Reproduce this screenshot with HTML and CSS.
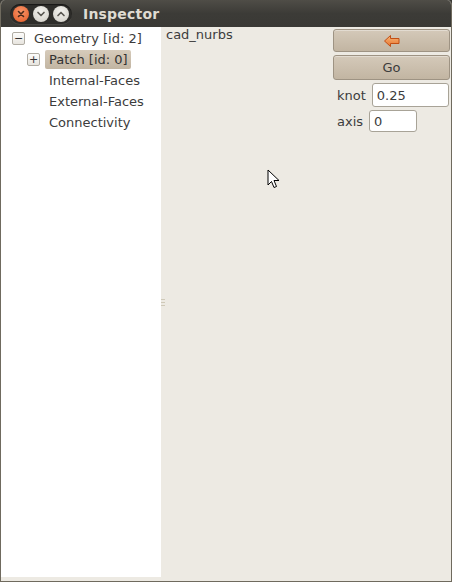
FILE: index.html
```html
<!DOCTYPE html>
<html>
<head>
<meta charset="utf-8">
<link rel="stylesheet" href="styles.css">
</head>
<body>
<div class="window">
  <div class="titlebar">
    <div class="controls">
      <span class="wbtn close"><svg width="14" height="14" viewBox="0 0 14 14"><path d="M4.5 4.5 L9.5 9.5 M9.5 4.5 L4.5 9.5" stroke="#4a2a1a" stroke-width="1.6" stroke-linecap="round"/></svg></span>
      <span class="wbtn"><svg width="14" height="14" viewBox="0 0 14 14"><path d="M4 5.5 L7 8.5 L10 5.5" fill="none" stroke="#5a5852" stroke-width="1.7" stroke-linecap="round" stroke-linejoin="round"/></svg></span>
      <span class="wbtn"><svg width="14" height="14" viewBox="0 0 14 14"><path d="M4 8.5 L7 5.5 L10 8.5" fill="none" stroke="#5a5852" stroke-width="1.7" stroke-linecap="round" stroke-linejoin="round"/></svg></span>
    </div>
    <span class="title">Inspector</span>
  </div>
  <div class="content">
    <div class="tree">
      <div class="row lvl0"><span class="exp">−</span><span class="item">Geometry [id: 2]</span></div>
      <div class="row lvl1"><span class="exp">+</span><span class="item selected">Patch [id: 0]</span></div>
      <div class="row lvl2"><span class="item">Internal-Faces</span></div>
      <div class="row lvl2"><span class="item">External-Faces</span></div>
      <div class="row lvl2"><span class="item">Connectivity</span></div>
    </div>
    <div class="splitter"><span></span><span></span><span></span></div>
    <div class="main">
      <div class="name">cad_nurbs</div>
    </div>
    <div class="side">
      <button class="btn back"><svg width="18" height="14" viewBox="0 0 18 14"><defs><linearGradient id="ag" x1="0" y1="0" x2="0" y2="1"><stop offset="0" stop-color="#f7b77a"/><stop offset="1" stop-color="#e8742e"/></linearGradient></defs><path d="M1.5 7 L7.5 1.5 L7.5 4.5 L16 4.5 L16 9.5 L7.5 9.5 L7.5 12.5 Z" fill="url(#ag)" stroke="#c24e14" stroke-width="1" stroke-linejoin="round"/></svg></button>
      <button class="btn go">Go</button>
      <div class="field knot"><span class="lbl">knot</span><span class="input wide">0.25</span></div>
      <div class="field axis"><span class="lbl">axis</span><span class="input narrow">0</span></div>
    </div>
  </div>
  <div class="bottom"></div>
  <svg class="cursor" width="14" height="22" viewBox="0 0 14 22"><path d="M1 1 L1 16 L4.5 12.5 L7 18.5 L9.5 17.5 L7 11.5 L12 11.5 Z" fill="#fff" stroke="#000" stroke-width="1" stroke-linejoin="round"/></svg>
</div>
</body>
</html>
```

FILE: styles.css
```css
* { box-sizing: border-box; }
html, body { margin: 0; padding: 0; }
body {
  width: 452px;
  height: 582px;
  font-family: "DejaVu Sans", sans-serif;
  font-size: 13px;
  color: #3c3c3c;
  background: #3c3b37;
}
.window {
  position: relative;
  width: 452px;
  height: 582px;
  display: flex;
  flex-direction: column;
  background: #edeae3;
  border-left: 1px solid #6f6a5e;
  border-right: 1px solid #6f6a5e;
  border-bottom: 1px solid #6f6a5e;
  border-radius: 5px 5px 0 0;
  overflow: hidden;
}
.titlebar {
  height: 27px;
  flex: none;
  display: flex;
  align-items: center;
  background: linear-gradient(#4f4d47, #3c3b37 50%, #3a3935);
  padding-left: 9px;
}
.controls {
  display: flex;
  gap: 4px;
  padding: 2px 3px;
  background: #2e2d2a;
  border-radius: 11px;
  box-shadow: inset 0 1px 1px rgba(0,0,0,.5), 0 1px 0 rgba(255,255,255,.08);
}
.wbtn {
  width: 16px;
  height: 16px;
  border-radius: 50%;
  display: flex;
  align-items: center;
  justify-content: center;
  background: radial-gradient(circle at 50% 35%, #f4f3ef, #cfccc4);
}
.wbtn.close {
  background: radial-gradient(circle at 50% 35%, #f99468, #e35b27);
}
.title {
  margin-left: 11px;
  font-weight: bold;
  font-size: 14px;
  color: #dfdbd2;
  letter-spacing: 0.2px;
}
.content {
  flex: 1;
  display: flex;
  min-height: 0;
}
.tree {
  width: 160px;
  flex: none;
  background: #fff;
  padding-top: 1px;
}
.row {
  height: 21px;
  display: flex;
  align-items: center;
}
.lvl0 { padding-left: 11px; }
.lvl1 { padding-left: 26px; }
.lvl2 { padding-left: 48px; }
.exp {
  width: 13px;
  height: 13px;
  border: 1px solid #b0aca3;
  border-radius: 2px;
  background: linear-gradient(#fdfdfc, #e7e4de);
  display: flex;
  align-items: center;
  justify-content: center;
  font-size: 11px;
  line-height: 1;
  color: #333;
  margin-right: 6px;
}
.item {
  white-space: nowrap;
}
.lvl0 .item { padding-left: 3px; }
.selected {
  padding: 2px 3px 2px 4px;
  margin-left: -1px;
  background: linear-gradient(#d6cbbb, #c2b5a2);
  border-radius: 2px;
  color: #333;
}
.splitter {
  width: 2px;
  flex: none;
  display: flex;
  flex-direction: column;
  justify-content: center;
  gap: 2px;
}
.splitter span {
  display: block;
  width: 4px;
  height: 1px;
  background: #cfc9b8;
}
.main {
  flex: 1;
  padding: 0 4px 0 3px;
}
.name { white-space: nowrap; }
.side {
  width: 119px;
  flex: none;
  padding: 2px 2px 0 1px;
  display: flex;
  flex-direction: column;
}
.btn {
  width: 117px;
  border: 1px solid #9e9383;
  border-radius: 3px;
  background: linear-gradient(#d4c9b9, #c2b5a2);
  box-shadow: inset 0 1px 0 rgba(255,255,255,.35);
  font-family: "DejaVu Sans", sans-serif;
  font-size: 13px;
  color: #3c3c3c;
  display: flex;
  align-items: center;
  justify-content: center;
  padding: 0;
}
.back { height: 23px; margin: 0 0 3px 0; }
.go { height: 25px; margin: 0 0 3px 0; }
.field {
  display: flex;
  align-items: center;
}
.knot { height: 24px; margin-bottom: 3px; }
.axis { height: 22px; }
.lbl { margin-left: 4px; margin-right: 6px; }
.input {
  height: 100%;
  background: #fff;
  border: 1px solid #a8a397;
  border-radius: 3px;
  padding: 0 4px;
  display: flex;
  align-items: center;
}
.wide { width: 78px; }
.narrow { width: 48px; }
.bottom {
  height: 4px;
  flex: none;
  background: #edeae3;
}
.cursor {
  position: absolute;
  left: 266px;
  top: 169px;
}
```
